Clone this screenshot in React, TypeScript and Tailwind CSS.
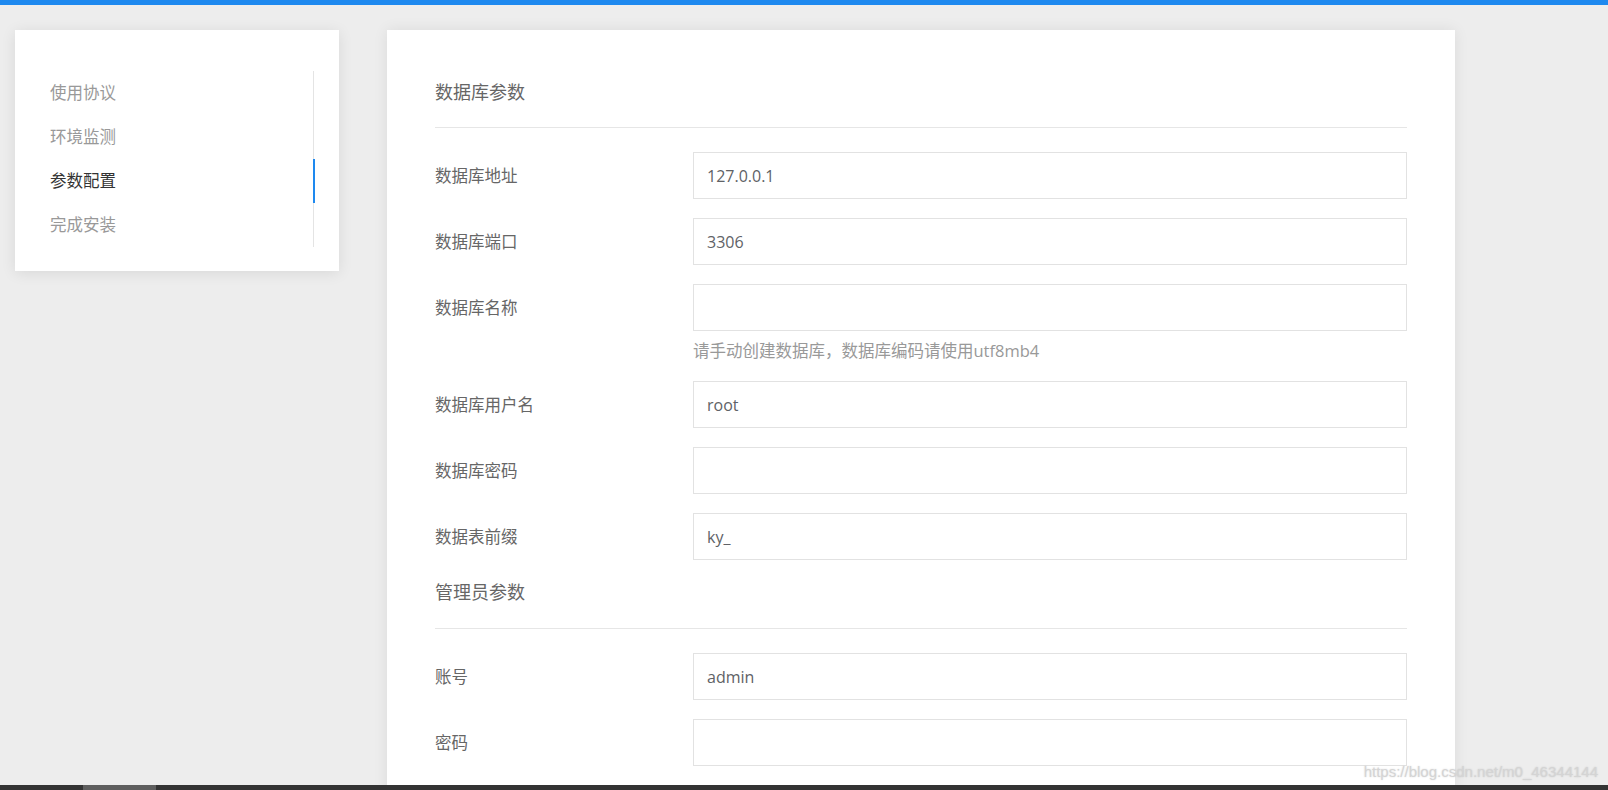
import React from 'react';

// =============================================================================
// DATA
// =============================================================================

const steps = ['使用协议', '环境监测', '参数配置', '完成安装'];
const activeStep = 2;

interface Field {
  label: string;
  value: string;
  type?: string;
  help?: string;
}

const dbFields: Field[] = [
  { label: '数据库地址', value: '127.0.0.1' },
  { label: '数据库端口', value: '3306' },
  { label: '数据库名称', value: '', help: '请手动创建数据库，数据库编码请使用utf8mb4' },
  { label: '数据库用户名', value: 'root' },
  { label: '数据库密码', value: '', type: 'password' },
  { label: '数据表前缀', value: 'ky_' },
];

const adminFields: Field[] = [
  { label: '账号', value: 'admin' },
  { label: '密码', value: '', type: 'password' },
];

// =============================================================================
// PIECES
// =============================================================================

function SectionTitle({ children, loose }: { children: React.ReactNode; loose?: boolean }) {
  return (
    <div
      className={`text-[18px] leading-[24px] text-[#666] border-b border-[#e6e6e6] mb-[24px] ${
        loose ? 'pt-[1px] pb-[24px]' : 'pb-[23px]'
      }`}
    >
      {children}
    </div>
  );
}

function FormRow({ field }: { field: Field }) {
  return (
    <div className={`flex items-start ${field.help ? 'mb-[18px]' : 'mb-[19px]'}`}>
      <label className="w-[258px] shrink-0 leading-[47px] text-[16.5px] text-[#666]">{field.label}</label>
      <div className="flex-1 flex flex-col">
        <input
          type={field.type || 'text'}
          defaultValue={field.value}
          className="h-[47px] w-full border border-[#e2e2e2] bg-white px-[13px] text-[16px] text-[#606266] outline-none"
        />
        {field.help && (
          <p className="mt-[8px] text-[16.5px] leading-[24px] text-[#999]">{field.help}</p>
        )}
      </div>
    </div>
  );
}

// =============================================================================
// MAIN PAGE
// =============================================================================

export default function App() {
  return (
    <div className="relative h-[790px] w-full overflow-hidden bg-[#ededed] flex flex-col font-['Open_Sans','Noto_Sans_CJK_SC',sans-serif]">
      {/* Top accent */}
      <div className="h-[5px] shrink-0 bg-[#1e89ef]" />

      <div className="flex-1 min-h-0 overflow-hidden flex items-start gap-[48px] pl-[15px] pt-[25px]">
        {/* Steps */}
        <aside className="w-[324px] shrink-0 bg-white shadow-[0_2px_14px_rgba(0,0,0,0.09)] pt-[41px] pb-[24px] pl-[35px] pr-[25px]">
          <ul className="border-r border-[#e4e4e4]">
            {steps.map((s, i) => (
              <li
                key={s}
                className={`relative h-[44px] flex items-center text-[16.5px] ${
                  i === activeStep ? 'text-[#333]' : 'text-[#999]'
                }`}
              >
                {s}
                {i === activeStep && (
                  <span className="absolute right-[-2px] top-0 h-full w-[2px] bg-[#1e89ef]" />
                )}
              </li>
            ))}
          </ul>
        </aside>

        {/* Form */}
        <main className="w-[1068px] shrink-0 bg-white shadow-[0_0_14px_rgba(0,0,0,0.08)] px-[48px] pt-[50px] pb-[40px]">
          <SectionTitle>数据库参数</SectionTitle>
          {dbFields.map((f) => (
            <FormRow key={f.label} field={f} />
          ))}
          <SectionTitle loose>管理员参数</SectionTitle>
          {adminFields.map((f) => (
            <FormRow key={f.label} field={f} />
          ))}
        </main>
      </div>

      {/* Horizontal scrollbar */}
      <div className="h-[5px] shrink-0 bg-[#333] flex">
        <div className="ml-[83px] w-[73px] bg-[#5e5e5e]" />
      </div>

      {/* Watermark */}
      <span className="absolute right-[10px] bottom-[11px] text-[15px] leading-none text-[#d4d4d4] font-['Liberation_Sans',sans-serif] [text-shadow:0_0_2px_rgba(0,0,0,0.15)]">
        https://blog.csdn.net/m0_46344144
      </span>
    </div>
  );
}
